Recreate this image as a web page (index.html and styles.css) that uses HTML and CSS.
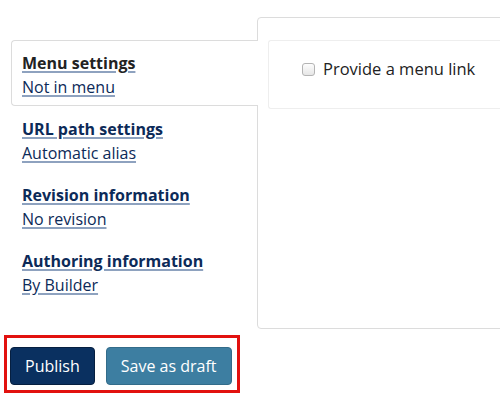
FILE: index.html
```html
<!DOCTYPE html>
<html lang="en">
<head>
    <meta charset="UTF-8">
    <meta name="viewport" content="width=device-width, initial-scale=1.0">
    <title>Node edit - vertical tabs</title>
    <link rel="stylesheet" href="styles.css">
</head>
<body>
    <div class="vertical-tabs">
        <ul class="tabs-menu">
            <li class="tab-item active">
                <a href="#menu"><strong>Menu settings</strong></a>
                <a href="#menu" class="summary">Not in menu</a>
            </li>
            <li class="tab-item">
                <a href="#path"><strong>URL path settings</strong></a>
                <a href="#path" class="summary">Automatic alias</a>
            </li>
            <li class="tab-item">
                <a href="#revision"><strong>Revision information</strong></a>
                <a href="#revision" class="summary">No revision</a>
            </li>
            <li class="tab-item">
                <a href="#author"><strong>Authoring information</strong></a>
                <a href="#author" class="summary">By Builder</a>
            </li>
        </ul>
        <div class="tabs-pane">
            <div class="details-wrapper">
                <label class="form-check">
                    <input type="checkbox">
                    <span>Provide a menu link</span>
                </label>
            </div>
        </div>
    </div>

    <div class="form-actions">
        <button class="btn btn-primary">Publish</button>
        <button class="btn btn-secondary">Save as draft</button>
    </div>
</body>
</html>
```

FILE: styles.css
```css
/* node form - vertical tabs */
body {
    margin: 0;
    font-family: "Open Sans", "DejaVu Sans", sans-serif;
    font-size: 16px;
    color: #222;
    background: #fff;
    overflow: hidden;
}

.vertical-tabs {
    display: flex;
    align-items: flex-start;
    padding-top: 17px;
    margin-right: -20px;
}

.tabs-menu {
    list-style: none;
    width: 247px;
    margin: 23px -1px 0 11px;
    padding: 0;
    position: relative;
    z-index: 1;
}

.tab-item {
    height: 54px;
    padding: 10px 10px 0 10px;
    border: 1px solid transparent;
    border-right: none;
    line-height: 24px;
}

.tab-item.active {
    background: #fff;
    border-color: #dcdcdc;
    border-radius: 4px 0 0 4px;
}

.tab-item a {
    display: table;
    color: #0c2a58;
    text-decoration: underline;
    text-decoration-color: #8ea2bf;
    text-decoration-thickness: 1.5px;
    text-underline-offset: 2px;
}

.tab-item.active a strong {
    color: #222;
}

.tabs-pane {
    flex: 1;
    height: 312px;
    border: 1px solid #dcdcdc;
    border-radius: 4px;
    padding: 22px 0 0 10px;
    box-sizing: border-box;
}

.details-wrapper {
    height: 50px;
    padding: 17px 0 0 33px;
    border: 1px solid #eee;
    border-right: none;
    border-radius: 3px 0 0 3px;
}

.form-check {
    display: flex;
    align-items: center;
    line-height: 22px;
    font-size: 16.5px;
}

.form-check input {
    appearance: none;
    width: 13px;
    height: 13px;
    margin: 1px 8px 0 0;
    border: 1px solid #b4b4b4;
    border-radius: 3px;
    background: linear-gradient(#fdfdfd, #e6e6e6);
}

.form-actions {
    display: inline-flex;
    gap: 11px;
    margin: 6px 0 0 4px;
    padding: 9px 5px 5px 3px;
    border: 3px solid #e2110f;
}

.btn {
    font-family: "Open Sans", "DejaVu Sans", sans-serif;
    font-size: 16px;
    color: #fff;
    height: 38px;
    padding: 0 14px;
    border-radius: 4px;
    cursor: pointer;
}

.btn-primary {
    background: #0a3060;
    border: 1px solid #061f40;
}

.btn-secondary {
    background: #3d7ea1;
    border: 1px solid #336c8a;
}
```
